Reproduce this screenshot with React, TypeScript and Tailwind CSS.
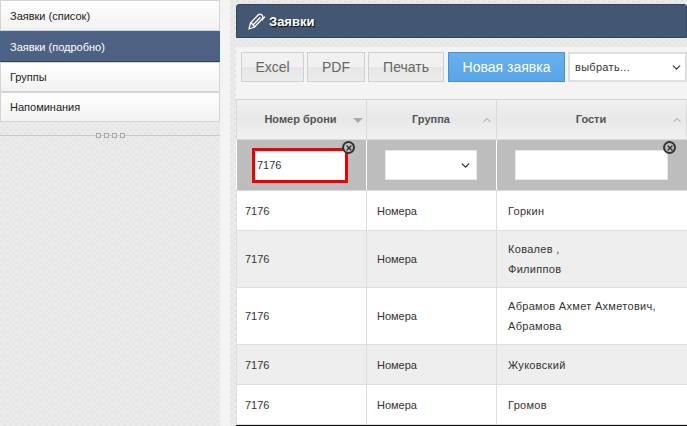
import { ChevronDown, ChevronUp, X } from 'lucide-react'

const sideItems = ['Заявки (список)', 'Заявки (подробно)', 'Группы', 'Напоминания']

const rows = [
  { id: '7176', group: 'Номера', guests: ['Горкин'], h: 'h-[40px]', alt: false },
  { id: '7176', group: 'Номера', guests: ['Ковалев ,', 'Филиппов'], h: 'h-[57px]', alt: true },
  { id: '7176', group: 'Номера', guests: ['Абрамов Ахмет Ахметович,', 'Абрамова'], h: 'h-[57px]', alt: false },
  { id: '7176', group: 'Номера', guests: ['Жуковский'], h: 'h-[40px]', alt: true },
  { id: '7176', group: 'Номера', guests: ['Громов'], h: 'h-[40px]', alt: false },
]

const texture = 'bg-[repeating-conic-gradient(#ebebeb_0_25%,#e6e6e6_0_50%)] bg-[length:6px_6px]'
const grayBtn = 'h-[30px] border border-[#d0d0d0] bg-[linear-gradient(#f1f1f1,#f1f1f1_50%,#e6e6e6_50%,#ececec)] text-[14px] text-[#666]'

function ClearIcon() {
  return (
    <span className="absolute right-[11px] top-[1px] flex h-[13px] w-[13px] items-center justify-center rounded-full border-2 border-[#333] bg-[#bdbdbd]">
      <X className="h-[8px] w-[8px] text-[#333]" strokeWidth={4} />
    </span>
  )
}

function Th({ label, sorted }: { label: string; sorted?: boolean }) {
  return (
    <div className="relative flex h-full items-center justify-center bg-[linear-gradient(#f0f0f0,#e8e8e8_50%,#f1f1f1)] text-[11px] font-bold text-[#555]">
      <span className={sorted ? 'mr-[2px]' : 'mr-px'}>{label}</span>
      {sorted ? (
        <span className="absolute right-[3px] top-[18px] h-0 w-0 border-x-[5px] border-t-[5px] border-x-transparent border-t-[#aaa]" />
      ) : (
        <ChevronUp className="absolute right-[3px] top-[14px] h-[12px] w-[12px] text-[#999]" strokeWidth={2} />
      )}
    </div>
  )
}

export default function App() {
  return (
    <div className="flex h-[426px] w-[687px] overflow-hidden bg-[#f3f3f3] font-['Liberation_Sans',Arial,sans-serif]">
      {/* Sidebar */}
      <div className={`h-full w-[220px] shrink-0 ${texture}`}>
        <div className="flex flex-col">
          {sideItems.map((item, i) =>
            i === 1 ? (
              <div
                key={item}
                className="flex h-[31px] items-center border border-[#3f6796] border-b-[#2f4057] bg-[#4d6283] pl-[9px] pt-[2px] text-[11px] text-white"
              >
                {item}
              </div>
            ) : (
              <div
                key={item}
                className={`flex items-center border border-[#d4d4d4] bg-[linear-gradient(#ffffff,#f1f1f1)] pl-[9px] pt-px text-[11px] text-[#222] ${i === 0 ? 'h-[31px]' : 'h-[30px]'}`}
              >
                {item}
              </div>
            ),
          )}
        </div>
        <div className="relative mt-[13px] h-px bg-[#c9c9c9]">
          <div className="absolute left-[96px] top-[-2px] flex gap-[3px]">
            {[0, 1, 2, 3].map((n) => (
              <span key={n} className="h-[5px] w-[5px] border border-[#aaa] bg-[#e8e8e8]" />
            ))}
          </div>
        </div>
      </div>

      <div className="w-[10px] shrink-0 bg-[#f3f3f3]" />

      {/* Main */}
      <div className={`flex h-full min-w-0 flex-1 flex-col pl-[6px] ${texture}`}>
        <div className="mt-[4px] flex h-[34px] shrink-0 items-center rounded-t-[3px] border border-[#34465f] bg-[#435672] pl-[10px]">
          <svg width="19" height="19" viewBox="0 0 19 19" fill="none" stroke="#fff" strokeWidth="1.3" strokeLinecap="round" strokeLinejoin="round">
            <path d="M2 17 L3.5 11 L11 3 Q13 1.5 15 3 Q16.5 5 15 7 L7.5 15 Z" />
            <path d="M6 13 L13 5.5" />
            <path d="M3.5 11 Q6 11.5 7.5 15" />
            <path d="M15 8 L17.5 5" />
          </svg>
          <span className="ml-[3px] pt-[2px] text-[13px] font-bold text-white [text-shadow:1px_1px_1px_#111]">Заявки</span>
        </div>

        <div className="mt-[9px] min-h-0 flex-1 bg-[#f4f4f4]">
          {/* Toolbar */}
          <div className="flex h-[52px] items-start gap-[3px] pl-[5px] pt-[5px]">
            <button className={`${grayBtn} w-[63px]`}>Excel</button>
            <button className={`${grayBtn} w-[58px]`}>PDF</button>
            <button className={`${grayBtn} mr-px w-[76px]`}>Печать</button>
            <button className="h-[30px] w-[117px] border border-[#4c90cf] bg-[linear-gradient(#69b0ee,#5aa5e6)] text-[14px] text-white">
              Новая заявка
            </button>
            <div className="flex h-[30px] flex-1 items-center justify-between border-2 border-[#dedede] bg-white pl-[5px] pr-[2px] text-[11px] tracking-[0.3px] text-[#333]">
              <span>выбрать...</span>
              <ChevronDown className="h-[13px] w-[13px] text-[#444]" strokeWidth={2.5} />
            </div>
          </div>

          {/* Table */}
          <div className="border-t border-[#d5d5d5]">
            <div className="grid h-[40px] grid-cols-[129px_129px_1fr] gap-x-px border-b border-l border-[#dadada] bg-[#dadada] pr-px">
              <Th label="Номер брони" sorted />
              <Th label="Группа" />
              <Th label="Гости" />
            </div>
            <div className="grid h-[51px] grid-cols-[129px_129px_1fr] gap-x-[1px] border-b border-[#dadada] bg-white pl-px">
              <div className="relative flex items-center bg-[#bdbdbd] pl-[15px]">
                <div className="flex h-[35px] w-[96px] items-center border-[3px] border-[#ee0000] bg-white pl-[2px] pt-px text-[11px] text-[#333]">
                  7176
                </div>
                <ClearIcon />
              </div>
              <div className="flex items-center bg-[#bdbdbd] pl-[18px]">
                <div className="flex h-[30px] w-[92px] items-center justify-end border border-[#e8e8e8] bg-white pr-[4px]">
                  <ChevronDown className="h-[13px] w-[13px] text-[#333]" strokeWidth={2.5} />
                </div>
              </div>
              <div className="relative flex items-center bg-[#bdbdbd] pl-[18px]">
                <div className="h-[30px] w-[153px] border border-[#e8e8e8] bg-white" />
                <ClearIcon />
              </div>
            </div>
            {rows.map((row, i) => (
              <div
                key={i}
                className={`grid ${row.h} grid-cols-[129px_129px_1fr] gap-x-px border-b border-[#dedede] bg-[#dedede] pl-px text-[11px] text-[#333]`}
              >
                <div className={`flex items-center pl-[8px] pt-px ${row.alt ? 'bg-[#eeeeee]' : 'bg-white'}`}>{row.id}</div>
                <div className={`flex items-center pl-[10px] pt-px ${row.alt ? 'bg-[#eeeeee]' : 'bg-white'}`}>{row.group}</div>
                <div className={`flex flex-col justify-center pl-[11px] leading-[20px] tracking-[0.3px] ${row.alt ? 'bg-[#eeeeee]' : 'bg-white'}`}>
                  {row.guests.map((g) => (
                    <div key={g}>{g}</div>
                  ))}
                </div>
              </div>
            ))}
            <div className="h-[2px] bg-[#111]" />
          </div>
        </div>
      </div>
    </div>
  )
}
